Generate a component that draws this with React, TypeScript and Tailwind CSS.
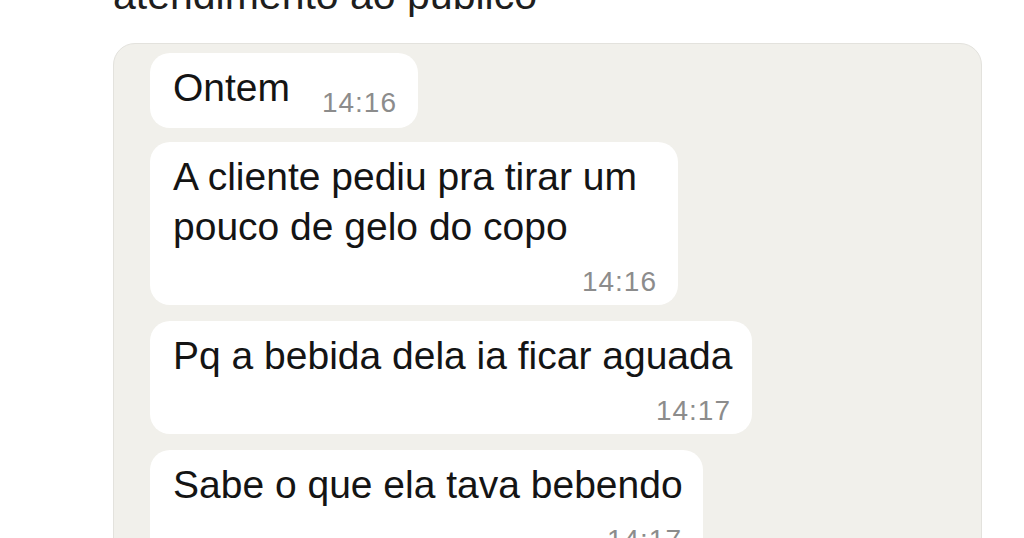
import React from "react";

const font = { fontFamily: '"Liberation Sans", Arial, sans-serif' };

function Stamp({ t }: { t: string }) {
  return (
    <div className="text-[28px] leading-[28px] tracking-[1px] text-[#8c8c8c] whitespace-nowrap">{t}</div>
  );
}

function Bubble({ lines, time, width }: { lines: string[]; time: string; width: string }) {
  return (
    <div className={`bg-white rounded-[20px] pl-[23px] pr-[21px] pt-[10px] pb-[9px] ${width}`}>
      <div className="text-[39px] leading-[50px] text-[#141414] whitespace-nowrap">
        {lines.map((l, i) => (
          <div key={i}>{l}</div>
        ))}
      </div>
      <div className="flex justify-end mt-[16px]">
        <Stamp t={time} />
      </div>
    </div>
  );
}

export default function App() {
  return (
    <div className="w-[1024px] h-[538px] overflow-hidden bg-white" style={font}>
      <div className="pl-[113px]">
        <div className="text-[41px] leading-[48px] text-[#1e1e1e] mt-[-29px] whitespace-nowrap">
          atendimento ao público
        </div>
        <div className="mt-[24px] w-[869px] h-[600px] rounded-[22px] bg-[#f1f0eb] border border-[#e3e2dd] pl-[36px] pt-[9px] flex flex-col items-start">
          <div className="w-[268px] bg-white rounded-[20px] pl-[23px] pr-[21px] pt-[10px] pb-[15px] flex items-end justify-between">
            <div className="text-[39px] leading-[50px] text-[#141414] whitespace-nowrap">Ontem</div>
            <div className="mb-[-4px]">
              <Stamp t="14:16" />
            </div>
          </div>
          <div className="mt-[14px]">
            <Bubble
              width="w-[528px]"
              lines={["A cliente pediu pra tirar um", "pouco de gelo do copo"]}
              time="14:16"
            />
          </div>
          <div className="mt-[16px]">
            <Bubble width="w-[602px]" lines={["Pq a bebida dela ia ficar aguada"]} time="14:17" />
          </div>
          <div className="mt-[16px]">
            <Bubble width="w-[553px]" lines={["Sabe o que ela tava bebendo"]} time="14:17" />
          </div>
        </div>
      </div>
    </div>
  );
}
